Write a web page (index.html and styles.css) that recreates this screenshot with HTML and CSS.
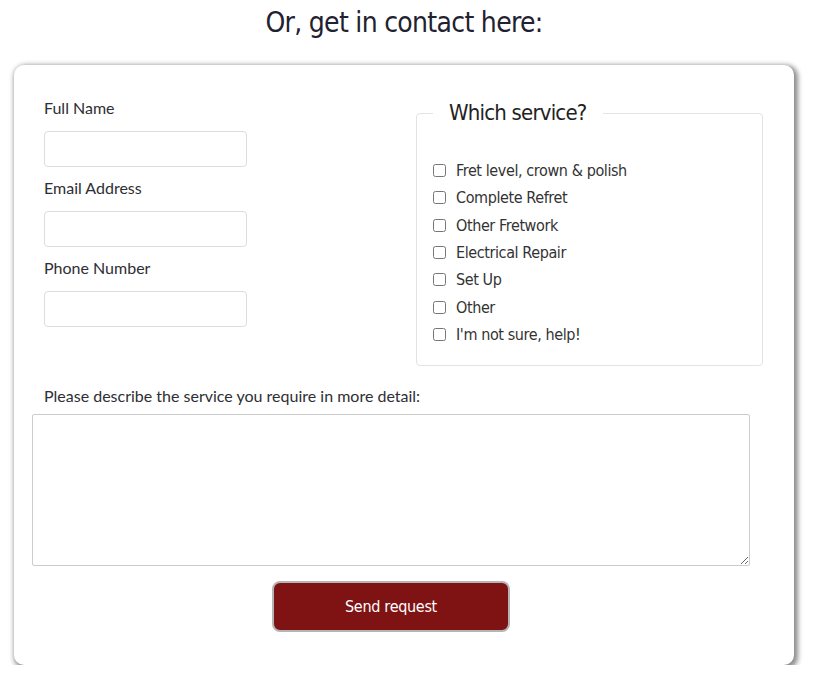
FILE: index.html
```html
<!DOCTYPE html>
<html lang="en">
<head>
<meta charset="utf-8">
<title>Contact</title>
<link rel="stylesheet" href="styles.css">
</head>
<body>
<main class="page">
  <h2 class="title">Or, get in contact here:</h2>
  <form class="card">
    <div class="top-row">
      <div class="fields">
        <label class="field">
          <span class="label">Full Name</span>
          <input class="input" type="text">
        </label>
        <label class="field">
          <span class="label">Email Address</span>
          <input class="input" type="email">
        </label>
        <label class="field">
          <span class="label">Phone Number</span>
          <input class="input" type="tel">
        </label>
      </div>
      <fieldset class="services">
        <legend class="legend">Which service?</legend>
        <ul class="options">
          <li><label class="option"><input type="checkbox" class="check"><span>Fret level, crown &amp; polish</span></label></li>
          <li><label class="option"><input type="checkbox" class="check"><span>Complete Refret</span></label></li>
          <li><label class="option"><input type="checkbox" class="check"><span>Other Fretwork</span></label></li>
          <li><label class="option"><input type="checkbox" class="check"><span>Electrical Repair</span></label></li>
          <li><label class="option"><input type="checkbox" class="check"><span>Set Up</span></label></li>
          <li><label class="option"><input type="checkbox" class="check"><span>Other</span></label></li>
          <li><label class="option"><input type="checkbox" class="check"><span>I'm not sure, help!</span></label></li>
        </ul>
      </fieldset>
    </div>
    <div class="detail">
      <label class="detail-label" for="detail">Please describe the service you require in more detail:</label>
      <textarea id="detail" class="textarea"></textarea>
      <div class="actions">
        <button type="button" class="send">Send request</button>
      </div>
    </div>
  </form>
</main>
</body>
</html>
```

FILE: styles.css
```css
* { box-sizing: border-box; }

body {
  margin: 0;
  background: #fff;
  font-family: Lato, "Noto Sans", sans-serif;
  color: #333;
}

.page {
  width: 780px;
  margin-left: 14px;
}

.title {
  margin: 0 0 22px;
  padding-top: 3px;
  text-align: center;
  font-family: "Liberation Sans Narrow", "DejaVu Sans Condensed", Roboto, sans-serif;
  font-weight: normal;
  font-size: 28px;
  letter-spacing: -0.7px;
  line-height: 40px;
  color: #1f2230;
}

.card {
  background: #fff;
  border-radius: 10px;
  box-shadow: 2px 2px 5px 2px rgba(0, 0, 0, 0.45);
  padding: 31px 31px 33px 30px;
}

.top-row {
  display: flex;
  justify-content: space-between;
  align-items: flex-start;
}

.fields {
  width: 203px;
  display: flex;
  flex-direction: column;
  gap: 9px;
}

.field {
  display: flex;
  flex-direction: column;
  gap: 11px;
}

.label {
  font-size: 16px;
  line-height: 24px;
  color: #2e2e34;
}

.input {
  width: 203px;
  height: 36px;
  border: 1px solid #ddd;
  border-radius: 4px;
  margin: 0;
  font: inherit;
}

.services {
  width: 347px;
  margin: 2px 0 0;
  padding: 12px 16px 17px;
  border: 1px solid #e3e3e3;
  border-radius: 4px;
}

.legend {
  padding: 0 16px;
  font-family: "Liberation Sans Narrow", "DejaVu Sans Condensed", Roboto, sans-serif;
  font-size: 22px;
  letter-spacing: -0.8px;
  line-height: 30px;
  color: #222;
}

.options {
  list-style: none;
  margin: 17px 0 0;
  padding: 0;
}

.option {
  display: flex;
  align-items: center;
  height: 27.33px;
  font-family: "Liberation Sans Narrow", "DejaVu Sans Condensed", Roboto, sans-serif;
  font-size: 16px;
  letter-spacing: -0.4px;
  color: #333;
}

.check {
  width: 13px;
  height: 13px;
  margin: 0 10px 0 0;
}

.detail {
  width: 718px;
  margin: 18px 0 0 -12px;
  display: flex;
  flex-direction: column;
}

.detail-label {
  padding-left: 12px;
  font-size: 16px;
  line-height: 24px;
  color: #2e2e34;
}

.textarea {
  margin-top: 6px;
  width: 718px;
  height: 152px;
  border: 1px solid #ccc;
  border-radius: 2px;
  font: inherit;
  resize: vertical;
}

.actions {
  display: flex;
  justify-content: center;
  margin-top: 15px;
}

.send {
  width: 238px;
  height: 51px;
  background: #7f1213;
  border: 2px solid #b5b5b5;
  border-radius: 8px;
  color: #fff;
  font-family: "Liberation Sans Narrow", "DejaVu Sans Condensed", Roboto, sans-serif;
  font-size: 16px;
  letter-spacing: -0.3px;
}
```
